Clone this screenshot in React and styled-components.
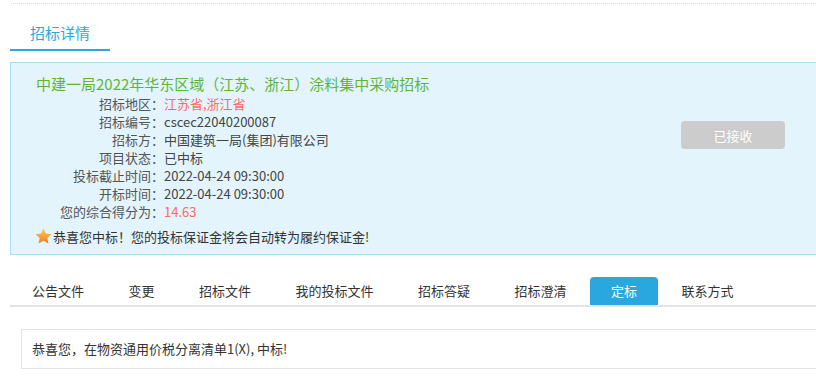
import React from "react";
import styled, { createGlobalStyle } from "styled-components";

const GlobalStyle = createGlobalStyle`
  html, body {
    margin: 0;
    padding: 0;
    background: #fff;
    overflow: hidden;
  }
  body {
    font-family: "Microsoft YaHei", "Noto Sans CJK SC", sans-serif;
    color: #333;
  }
`;

const info = [
  { label: "招标地区：", value: "江苏省,浙江省", red: true },
  { label: "招标编号：", value: "cscec22040200087" },
  { label: "招标方：", value: "中国建筑一局(集团)有限公司" },
  { label: "项目状态：", value: "已中标" },
  { label: "投标截止时间：", value: "2022-04-24 09:30:00" },
  { label: "开标时间：", value: "2022-04-24 09:30:00" },
  { label: "您的综合得分为：", value: "14.63", red: true },
];

const tabs = [
  "公告文件",
  "变更",
  "招标文件",
  "我的投标文件",
  "招标答疑",
  "招标澄清",
  "定标",
  "联系方式",
];

const Star = () => (
  <svg width="17" height="17" viewBox="0 0 24 24">
    <defs>
      <linearGradient id="starFill" x1="0" y1="0" x2="0" y2="1">
        <stop offset="0" stopColor="#ffc95e" />
        <stop offset="1" stopColor="#f27c17" />
      </linearGradient>
    </defs>
    <path
      d="M12 0.8l3.4 7.1 7.8.9-5.8 5.3 1.6 7.7L12 17.9l-7 3.9 1.6-7.7-5.8-5.3 7.8-.9z"
      fill="url(#starFill)"
    />
  </svg>
);

const App = () => {
  const active = "定标";

  return (
    <>
      <GlobalStyle />
      <Page>
        <TopRule />
        <DetailTab>招标详情</DetailTab>

        <Panel>
          <Info>
            <Title>中建一局2022年华东区域（江苏、浙江）涂料集中采购招标</Title>
            {info.map((row) => (
              <Row key={row.label}>
                <Label>{row.label}</Label>
                <Value red={row.red}>{row.value}</Value>
              </Row>
            ))}
            <Notice>
              <Star />
              恭喜您中标！您的投标保证金将会自动转为履约保证金!
            </Notice>
          </Info>
          <ReceivedButton disabled>已接收</ReceivedButton>
        </Panel>

        <TabBar>
          {tabs.map((t) => (
            <Tab key={t} active={t === active}>
              {t}
            </Tab>
          ))}
        </TabBar>

        <ResultBox>恭喜您，在物资通用价税分离清单1(X), 中标!</ResultBox>
      </Page>
    </>
  );
};

export default App;

const Page = styled.div`
  width: 860px;
  padding-left: 10px;
  box-sizing: border-box;
`;

const TopRule = styled.div`
  margin: 3px 0 0 1px;
  border-top: 1px dotted #dcdcdc;
`;

const DetailTab = styled.div`
  width: 100px;
  height: 47px;
  box-sizing: border-box;
  padding-top: 19px;
  line-height: 20px;
  text-align: center;
  font-size: 15px;
  color: #29a8e0;
  border-bottom: 2px solid #29a8e0;
`;

const Panel = styled.div`
  margin-top: 11px;
  display: flex;
  align-items: flex-start;
  background: #e3f4fc;
  border: 1px solid #aadcf2;
  padding: 10px 0 8px 25px;
`;

const Info = styled.div`
  flex: 1;
`;

const Title = styled.div`
  font-size: 15px;
  line-height: 22px;
  color: #5fb436;
`;

const Row = styled.div`
  display: flex;
  font-size: 13px;
  line-height: 18px;
`;

const Label = styled.span`
  width: 128px;
  text-align: right;
  color: #555;
`;

const Value = styled.span`
  color: ${(p) => (p.red ? "#ff6a5c" : "#444")};
`;

const Notice = styled.div`
  margin-top: 7px;
  margin-left: -1px;
  display: flex;
  align-items: center;
  gap: 1px;
  font-size: 13px;
  line-height: 18px;
  color: #333;
  svg {
    margin-top: -2px;
  }
`;

const ReceivedButton = styled.button`
  margin: 48px 74px 0 0;
  width: 104px;
  height: 28px;
  border: none;
  border-radius: 4px;
  background: #cccccc;
  color: #fff;
  font-family: inherit;
  font-size: 13px;
`;

const TabBar = styled.div`
  margin-top: 22px;
  display: flex;
  gap: 2.5px;
  padding-left: 1px;
  border-bottom: 2px solid #e4e4e4;
`;

const Tab = styled.div`
  height: 28px;
  line-height: 28px;
  padding: 0 21px;
  font-size: 13px;
  border-radius: 4px 4px 0 0;
  color: ${(p) => (p.active ? "#fff" : "#333")};
  background: ${(p) => (p.active ? "#29a8e0" : "transparent")};
`;

const ResultBox = styled.div`
  margin: 22px 0 0 11px;
  height: 40px;
  box-sizing: border-box;
  border: 1px solid #e3e3e3;
  padding-left: 10px;
  line-height: 38px;
  font-size: 13px;
  color: #333;
`;
